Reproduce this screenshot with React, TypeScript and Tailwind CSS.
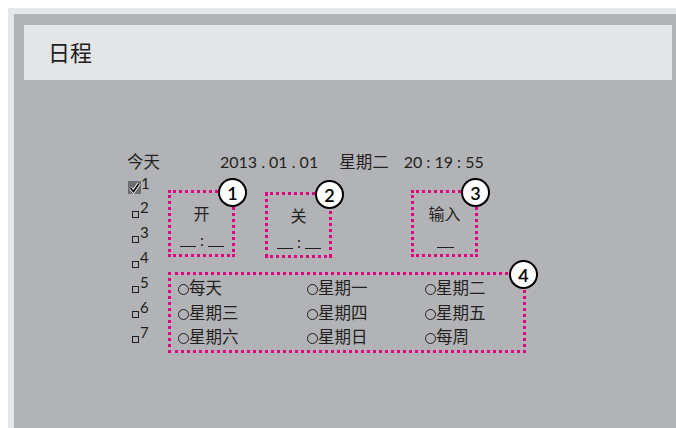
import React from 'react'

const font = "font-['Lato','Noto_Sans_CJK_SC',sans-serif]"

function Badge({ n }: { n: number }) {
  return (
    <div className="absolute -top-[15px] -right-[15px] w-[29px] h-[29px] rounded-full border-2 border-black bg-white flex items-center justify-center text-[18px] font-semibold text-black leading-none">
      {n}
    </div>
  )
}

function Blank() {
  return <span className="inline-block w-[16px] h-[1.5px] bg-[#231f20] mb-[3px]" />
}

function TimeSlot({ label, time = true }: { label: string; time?: boolean }) {
  return (
    <div className="flex flex-col items-center pt-[11px] gap-[6px] text-[16px] leading-[20px]">
      <span>{label}</span>
      {time ? (
        <span className="flex items-end gap-[4px] h-[20px] pl-[1px]">
          <Blank />
          <span>:</span>
          <Blank />
        </span>
      ) : (
        <span className="flex items-end h-[20px] pl-[2px]">
          <span className="inline-block w-[17px] h-[1.5px] bg-[#231f20] mb-[2px]" />
        </span>
      )}
    </div>
  )
}

function DayOption({ label }: { label: string }) {
  return (
    <div className="flex items-center h-[24.5px]">
      <span className="inline-block w-[11px] h-[11px] rounded-full border-[1.5px] border-[#231f20] mt-[3px]" />
      <span className="text-[16.5px] leading-[20px]">{label}</span>
    </div>
  )
}

export default function App() {
  const days = ['每天', '星期一', '星期二', '星期三', '星期四', '星期五', '星期六', '星期日', '每周']

  return (
    <div className={`w-[676px] h-[428px] bg-white pt-2 pl-2 text-[#231f20] ${font}`}>
      <div className="h-[420px] bg-[#e6e7e9] pt-[6px] pl-[6px]">
        <div className="h-full bg-[#b2b3b6] pt-[11px] pl-[10px] pr-[4px]">
          <div className="h-[55px] bg-[#e4e5e7] flex items-center pl-[24px] text-[22px]">
            日程
          </div>

          <div className="pl-[103px] pt-[72px]">
            <div className="flex items-center h-[20px] text-[16px] leading-[20px]">
              <span className="w-[93px] text-[16.5px]">今天</span>
              <span>2013 . 01 . 01</span>
              <span className="ml-[21px] text-[16.5px]">星期二</span>
              <span className="ml-[15px]">20 : 19 : 55</span>
            </div>

            <div className="flex">
              <div className="w-[41px] flex flex-col">
                <div className="h-[25px] flex items-end pb-[3px] pl-[1px]">
                  <span className="relative w-[13px] h-[13px] bg-[#6d6e71] inline-block">
                    <svg viewBox="0 0 13 13" className="absolute inset-0 w-[13px] h-[13px]">
                      <path d="M2.5 7 L5.5 10.5 L11 2.5" fill="none" stroke="#fff" strokeWidth="3.4" />
                      <path d="M2.5 7 L5.5 10.5 L11 2.5" fill="none" stroke="#111" strokeWidth="1.8" />
                    </svg>
                  </span>
                  <span className="text-[15px] leading-none mb-[3px]">1</span>
                </div>
                {[2, 3, 4, 5, 6, 7].map((n) => (
                  <div key={n} className="h-[25px] flex items-end pb-[4px] pl-[5px]">
                    <span className="inline-block w-[7px] h-[7px] border-[1.5px] border-[#231f20]" />
                    <span className="text-[15px] leading-none mb-[3px] ml-[1px]">{n}</span>
                  </div>
                ))}
              </div>

              <div className="flex flex-col pt-[18px]">
                <div className="flex items-start">
                  <div className="relative w-[67px] h-[67px] border-[3px] border-dotted border-[#e5007e]">
                    <TimeSlot label="开" />
                    <Badge n={1} />
                  </div>
                  <div className="relative w-[67px] h-[66px] mt-[2px] ml-[30px] border-[3px] border-dotted border-[#e5007e]">
                    <TimeSlot label="关" />
                    <Badge n={2} />
                  </div>
                  <div className="relative w-[67px] h-[67px] ml-[79px] border-[3px] border-dotted border-[#e5007e]">
                    <TimeSlot label="输入" time={false} />
                    <Badge n={3} />
                  </div>
                </div>

                <div className="relative w-[358px] h-[81px] mt-[14px] border-[3px] border-dotted border-[#e5007e]">
                  <div className="grid grid-cols-[129px_118px_1fr] pl-[7px] pt-[1px]">
                    {days.map((d) => (
                      <DayOption key={d} label={d} />
                    ))}
                  </div>
                  <Badge n={4} />
                </div>
              </div>
            </div>
          </div>
        </div>
      </div>
    </div>
  )
}
